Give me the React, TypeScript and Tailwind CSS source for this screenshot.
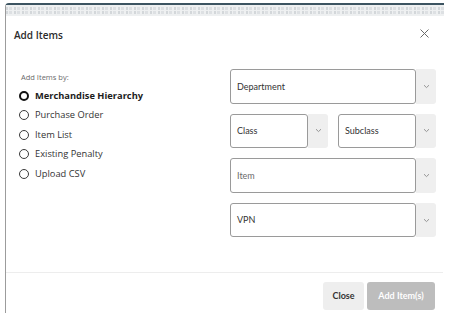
import React from "react";

const Chevron = () => (
  <svg width="7" height="5" viewBox="0 0 7 5" fill="none">
    <path d="M1 1.2 L3.5 3.6 L6 1.2" stroke="#8a8a8a" strokeWidth="0.9" />
  </svg>
);

const Select = ({ label, muted }: { label: string; muted?: boolean }) => (
  <div className="flex h-[34.6px] w-full">
    <div
      className={`flex-1 flex items-center pl-[6px] bg-white border border-[#9a9a9a] rounded-[3px] text-[9px] ${
        muted ? "text-[#6b6b6b]" : "text-[#333]"
      }`}
      style={{ fontFamily: "Lato, 'Liberation Sans', sans-serif" }}
    >
      {label}
    </div>
    <div className="w-[20px] bg-[#efefef] rounded-r-[3px] flex items-center justify-center">
      <Chevron />
    </div>
  </div>
);

const Radio = ({ label, selected }: { label: string; selected?: boolean }) => (
  <div className="flex items-center h-[19.5px]">
    <span
      className={`inline-block w-[10px] h-[10px] rounded-full box-border ${
        selected ? "border-[2px] border-[#111]" : "border border-[#3a3a3a]"
      }`}
    />
    <span
      className={`ml-[6px] ${
        selected ? "font-bold text-[9.3px] text-[#1c1c1c]" : "text-[9.3px] text-[#333]"
      }`}
    >
      {label}
    </span>
  </div>
);

const TextureRow = () => (
  <div className="h-[3px] w-full bg-[repeating-linear-gradient(90deg,#d3d7da_0px,#d3d7da_2px,transparent_2px,transparent_3px,#dde0e3_3px,#dde0e3_6px,transparent_6px,transparent_8px)]" />
);

export default function App() {
  return (
    <div className="w-[450px] h-[313px] bg-white overflow-hidden pt-[3px] pl-[5px]">
      <div
        className="w-[439px] h-[310px] flex flex-col border-l border-l-[#9c9c9c] border-t-[2px] border-t-[#3c5461] rounded-tl-[4px] bg-white"
        style={{ fontFamily: "'Open Sans', 'Noto Sans', sans-serif" }}
      >
        <div className="h-[11px] bg-[#eef0f1] flex flex-col justify-center gap-[1.5px]">
          <TextureRow />
          <TextureRow />
        </div>
        <div className="h-[38px] flex items-center justify-between pl-[8px] pr-[15px]">
          <span className="text-[10px] font-semibold text-[#2b2b2b]">Add Items</span>
          <svg width="9" height="9" viewBox="0 0 9 9" fill="none" className="mt-[-3px]">
            <path d="M0.5 0.5 L8.5 8.5 M8.5 0.5 L0.5 8.5" stroke="#6a6a6a" strokeWidth="1" />
          </svg>
        </div>
        <div className="flex-1 flex">
          <div className="w-[224px] pl-[13px] pt-[18px]">
            <div className="text-[7.5px] leading-[10px] text-[#6a6a6a] pl-[2px]">Add Items by:</div>
            <div className="mt-[4px]">
              <Radio label="Merchandise Hierarchy" selected />
              <Radio label="Purchase Order" />
              <Radio label="Item List" />
              <Radio label="Existing Penalty" />
              <Radio label="Upload CSV" />
            </div>
          </div>
          <div className="w-[206px] pt-[15px] flex flex-col gap-[10px]">
            <Select label="Department" />
            <div className="flex gap-[10px]">
              <Select label="Class" />
              <Select label="Subclass" />
            </div>
            <Select label="Item" muted />
            <Select label="VPN" />
          </div>
        </div>
        <div className="border-t border-[#ededed] mr-[1px] pt-[9px] pb-[3px] pr-[8px] flex justify-end gap-[3px]">
          <button
            className="h-[28px] w-[41px] bg-[#eeeeee] rounded-[3px] text-[9px] font-bold text-[#333]"
            style={{ fontFamily: "Lato, 'Liberation Sans', sans-serif" }}
          >
            Close
          </button>
          <button
            className="h-[28px] w-[68px] bg-[#bdbdbd] rounded-[3px] text-[9px] font-bold text-white"
            style={{ fontFamily: "Lato, 'Liberation Sans', sans-serif" }}
          >
            Add Item(s)
          </button>
        </div>
      </div>
    </div>
  );
}
